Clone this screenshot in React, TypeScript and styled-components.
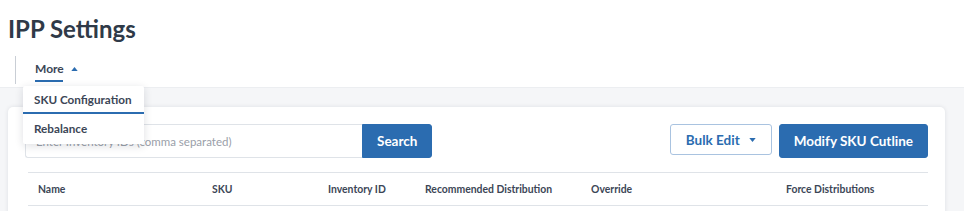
import * as React from 'react'
import styled, { createGlobalStyle } from 'styled-components'

const c = {
  blue: '#2b6cb0',
  text: '#2f3a48',
  label: '#3c4656',
  muted: '#8a919c',
  border: '#dfe3e8',
  page: '#f5f6f8',
}

const Global = createGlobalStyle`
  html, body {
    margin: 0;
    padding: 0;
    background: ${c.page};
    font-family: Lato, "Open Sans", "Liberation Sans", sans-serif;
    color: ${c.text};
  }
  * { box-sizing: border-box; }
`

const ui = {} as any
ui.Header = styled.div`
  background: #fff;
  height: 88px;
  padding: 16px 8px 0;
  border-bottom: 1px solid #eceef1;
`
ui.Title = styled.h1`
  margin: 0;
  font-size: 24px;
  line-height: 26px;
  font-weight: 700;
  color: ${c.text};
`
ui.Tabs = styled.div`
  display: flex;
  align-items: stretch;
  margin-top: 14px;
  margin-left: 7px;
  height: 28px;
  border-left: 1px solid #c9ced5;
  position: relative;
`
ui.Tab = styled.div`
  display: flex;
  align-items: center;
  gap: 7px;
  margin-left: 19px;
  font-size: 12px;
  font-weight: 700;
  color: ${c.label};
  height: 25px;
  position: relative;
`
ui.TabLine = styled.span`
  position: absolute;
  left: 0;
  width: 28px;
  bottom: -1px;
  height: 2px;
  background: ${c.blue};
`
ui.Menu = styled.div`
  position: absolute;
  top: 30px;
  left: 7px;
  width: 121px;
  background: #fff;
  box-shadow: 0 2px 8px rgba(20, 30, 50, 0.14);
  border-radius: 2px;
  z-index: 5;
`
ui.MenuItem = styled.div<{ $active?: boolean }>`
  height: ${(p) => (p.$active ? '28px' : '30px')};
  padding: 0 11px;
  display: flex;
  align-items: center;
  font-size: 11.7px;
  font-weight: 700;
  color: ${c.label};
  border-bottom: 2px solid ${(p) => (p.$active ? c.blue : 'transparent')};
`
ui.Body = styled.div`
  padding: 19px 19px 0 8px;
`
ui.Card = styled.div`
  background: #fff;
  border-radius: 5px;
  box-shadow: 0 0 4px rgba(20, 30, 50, 0.1);
  padding: 17px 17px 0 17px;
  height: 120px;
`
ui.Toolbar = styled.div`
  display: flex;
  align-items: flex-start;
  justify-content: space-between;
`
ui.SearchGroup = styled.div`
  display: flex;
`
ui.Input = styled.input`
  width: 337px;
  height: 34px;
  border: 1px solid ${c.border};
  border-right: none;
  border-radius: 3px 0 0 3px;
  padding: 0 10px;
  font-family: inherit;
  font-size: 11.5px;
  color: ${c.text};
  outline: none;
  &::placeholder { color: #9aa0a9; }
`
ui.Button = styled.button<{ $outline?: boolean; $joined?: boolean }>`
  height: ${(p) => (p.$outline ? '31px' : '34px')};
  padding: 0 ${(p) => (p.$outline ? '15px' : '14px')};
  font-family: inherit;
  font-size: 13.5px;
  font-weight: 700;
  display: flex;
  align-items: center;
  gap: 9px;
  border-radius: ${(p) => (p.$joined ? '0 3px 3px 0' : '3px')};
  border: 1px solid ${(p) => (p.$outline ? '#a9c3e0' : c.blue)};
  background: ${(p) => (p.$outline ? '#fff' : c.blue)};
  color: ${(p) => (p.$outline ? c.blue : '#fff')};
  cursor: pointer;
`
ui.Actions = styled.div`
  display: flex;
  gap: 7px;
`
ui.Table = styled.div`
  margin-top: 14px;
  margin-left: 3px;
  border-top: 1px solid ${c.border};
  border-bottom: 1px solid ${c.border};
  display: grid;
  grid-template-columns: 174px 116px 97px 166px 195px 1fr;
  height: 34px;
  align-items: center;
  padding-left: 10px;
`
ui.Th = styled.div`
  font-size: 10.4px;
  font-weight: 700;
  color: ${c.label};
  white-space: nowrap;
`

const Caret = ({ up }: { up?: boolean }) => (
  <svg width="7" height="4" viewBox="0 0 8 5">
    <path d={up ? 'M0 5 L4 0 L8 5 Z' : 'M0 0 L8 0 L4 5 Z'} fill={c.blue} />
  </svg>
)

const columns = ['Name', 'SKU', 'Inventory ID', 'Recommended Distribution', 'Override', 'Force Distributions']

const App = () => (
  <>
    <Global />
    <ui.Header>
      <ui.Title>IPP Settings</ui.Title>
      <ui.Tabs>
        <ui.Tab>
          More <Caret up />
          <ui.TabLine />
        </ui.Tab>
        <ui.Menu>
          <ui.MenuItem $active>SKU Configuration</ui.MenuItem>
          <ui.MenuItem>Rebalance</ui.MenuItem>
        </ui.Menu>
      </ui.Tabs>
    </ui.Header>
    <ui.Body>
      <ui.Card>
        <ui.Toolbar>
          <ui.SearchGroup>
            <ui.Input placeholder="Enter Inventory IDs (comma separated)" />
            <ui.Button $joined>Search</ui.Button>
          </ui.SearchGroup>
          <ui.Actions>
            <ui.Button $outline>
              Bulk Edit <Caret />
            </ui.Button>
            <ui.Button>Modify SKU Cutline</ui.Button>
          </ui.Actions>
        </ui.Toolbar>
        <ui.Table>
          {columns.map((col) => (
            <ui.Th key={col}>{col}</ui.Th>
          ))}
        </ui.Table>
      </ui.Card>
    </ui.Body>
  </>
)

export default App
